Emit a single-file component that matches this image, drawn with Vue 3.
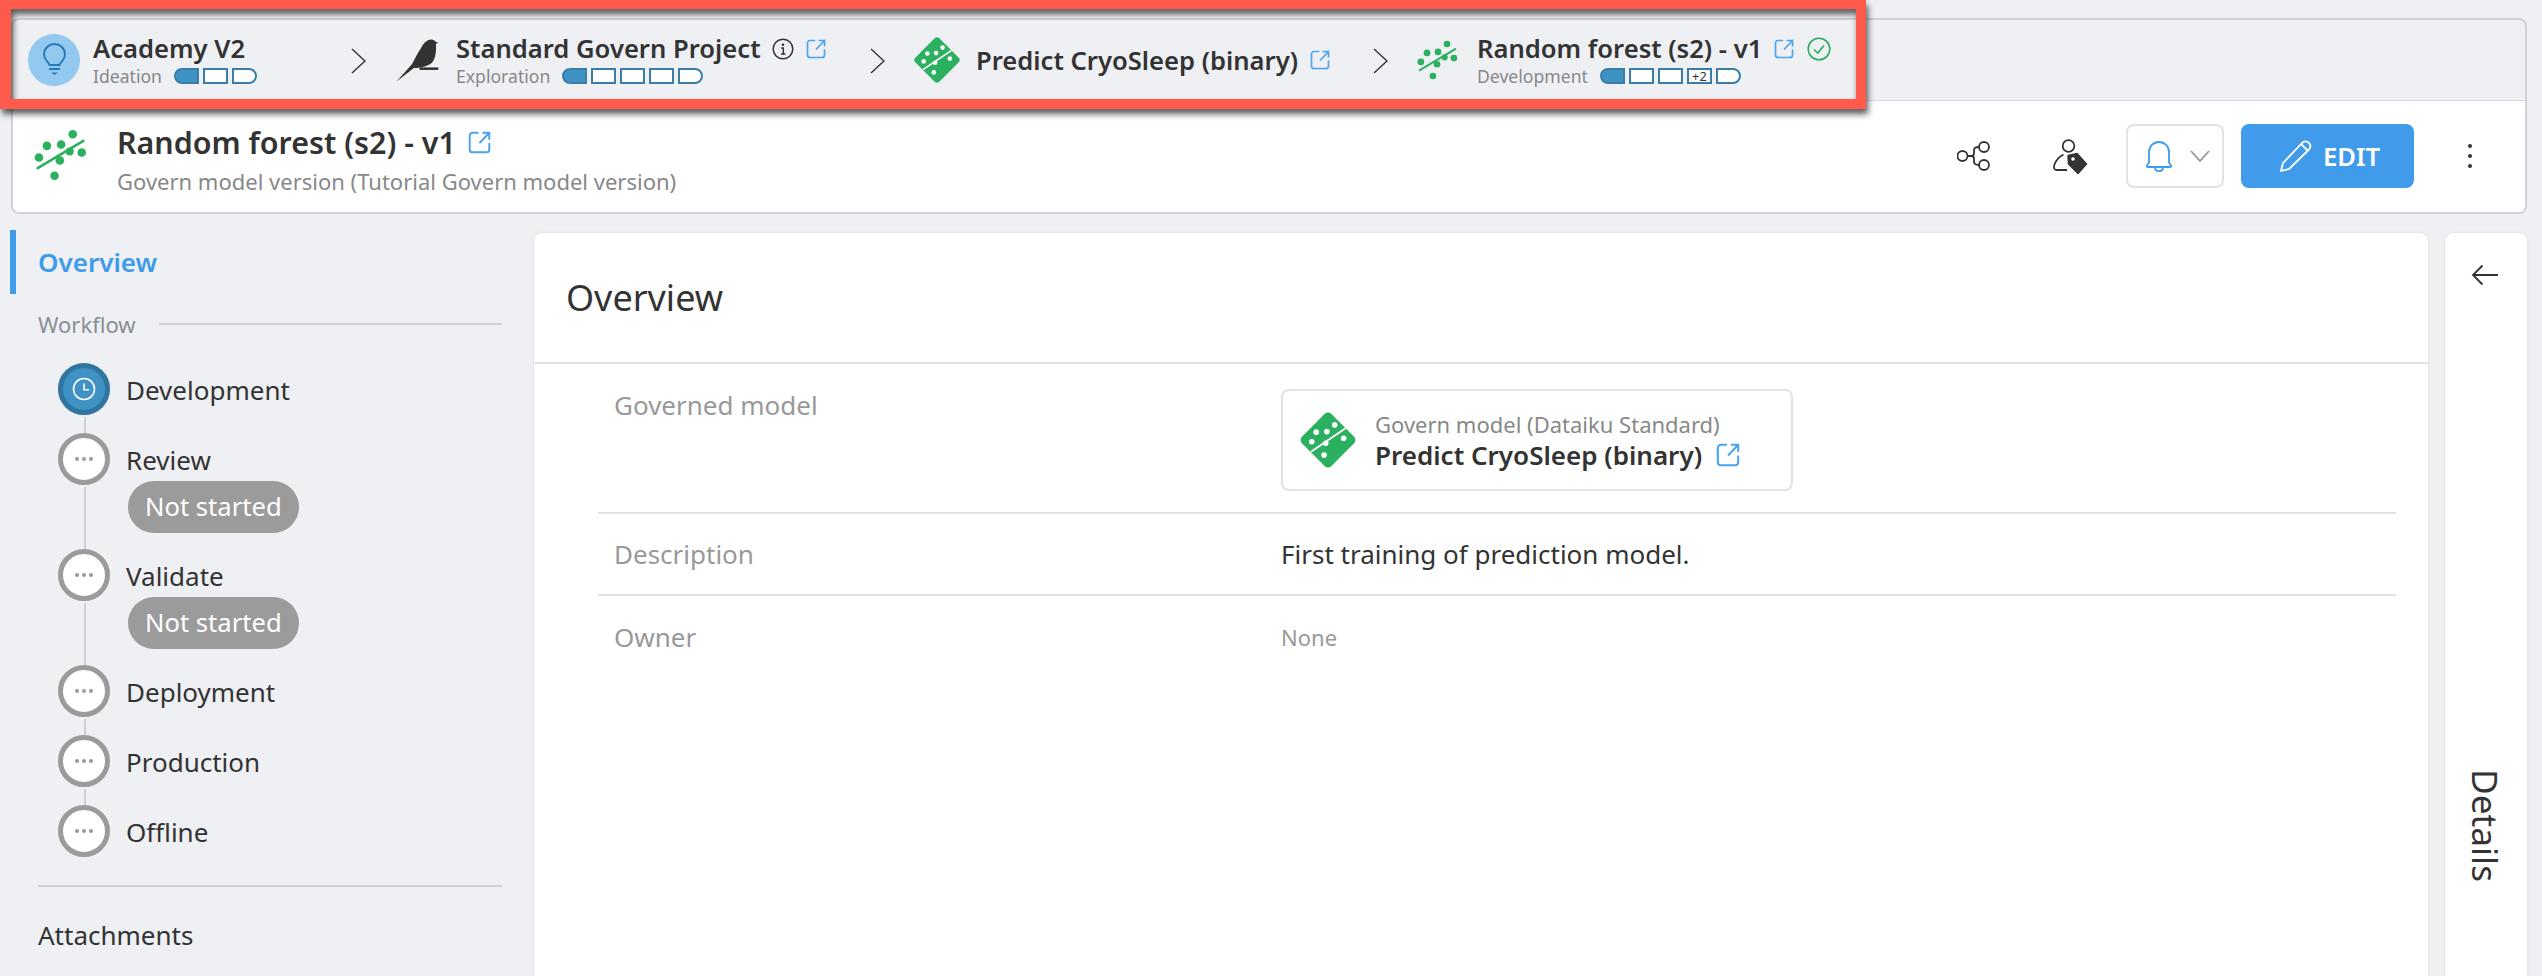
<script setup>
const segs = (n, extra) => Array.from({ length: n }, (_, i) => (i === extra ? '+2' : ''))
const crumbs = [
  { cls: 'c1', icon: '#i-bulb', title: 'Academy V2', phase: 'Ideation', steps: segs(3, -1) },
  { cls: 'c2', icon: '#i-bird', title: 'Standard Govern Project', phase: 'Exploration', steps: segs(5, -1), info: true, link: true },
  { cls: 'c3', icon: '#i-diamond', title: 'Predict CryoSleep (binary)', link: true },
  { cls: 'c4', icon: '#i-forest', title: 'Random forest (s2) - v1', phase: 'Development', steps: segs(5, 3), link: true, check: true },
]
const steps = [
  { name: 'Development', active: true },
  { name: 'Review', pill: 'Not started' },
  { name: 'Validate', pill: 'Not started' },
  { name: 'Deployment' },
  { name: 'Production' },
  { name: 'Offline' },
]
</script>

<template>
  <div class="page">
    <svg class="defs" aria-hidden="true">
      <symbol id="i-link" viewBox="0 0 20 20">
        <path d="M8.5 1.5H4A2.5 2.5 0 0 0 1.5 4v12A2.5 2.5 0 0 0 4 18.500h12a2.500 2.500 0 0 0 2.500-2.500v-5" fill="none" stroke="#4aa3ee" stroke-width="1.700" stroke-linecap="round" />
        <path d="M10 10.500 18.500 1.500M12.500 1.500h6v6" fill="none" stroke="#4aa3ee" stroke-width="1.700" />
      </symbol>
      <symbol id="i-diamond" viewBox="-50 -50 100 100">
        <rect x="-37" y="-37" width="74" height="74" rx="8" transform="rotate(45)" fill="#2bb05f" />
        <path d="M-29 20 30-20" stroke="#fff" stroke-width="3.500" stroke-linecap="round" />
        <g fill="#fff">
          <circle cx="-21" cy="-14" r="5" /><circle cx="-2" cy="-15" r="5" /><circle cx="12" cy="-27" r="5" />
          <circle cx="-29" cy="3" r="5" /><circle cx="28" cy="-3" r="5" /><circle cx="-4" cy="6" r="5" />
          <circle cx="-7" cy="27" r="5" />
        </g>
      </symbol>
      <symbol id="i-forest" viewBox="100 90 160 155">
        <path d="M111 207 249 125" stroke="#2bb05f" stroke-width="8" stroke-linecap="round" />
        <g fill="#2bb05f">
          <circle cx="217" cy="105" r="13" /><circle cx="139" cy="140" r="13" /><circle cx="182" cy="136" r="13" />
          <circle cx="115" cy="175" r="13" /><circle cx="178" cy="184" r="13" /><circle cx="208" cy="157" r="12" />
          <circle cx="244" cy="160" r="13" /><circle cx="162" cy="230" r="13" />
        </g>
      </symbol>
      <symbol id="i-bird" viewBox="40 65 140 142">
        <path d="M45 203 95 146C104 130 112 112 122 98 130 82 140 70 155 69 162 69 167 72 170 77L177 77 170 84C172 100 170 130 158 142 145 155 120 160 100 160Z" fill="#333" />
        <rect x="118" y="158" width="60" height="8" fill="#333" />
      </symbol>
      <symbol id="i-bulb" viewBox="0 0 52 52">
        <circle cx="26" cy="26" r="26" fill="#93c9ef" />
        <path d="M21.500 31C20.500 27.500 16 26.500 16 20.500a10.500 10.500 0 0 1 21 0C37 26.500 32.500 27.500 31.500 31Z" fill="none" stroke="#2a7ab8" stroke-width="2" />
        <path d="M21 35h11" stroke="#2a7ab8" stroke-width="2" />
        <path d="M23 38.500h7l-3.500 2.500Z" fill="#2a7ab8" />
      </symbol>
    </svg>

    <header class="head">
      <nav class="crumbs">
        <template v-for="(c, i) in crumbs" :key="c.title">
          <div class="crumb" :class="c.cls">
            <svg class="crumb-icon"><use :href="c.icon" /></svg>
            <div>
              <div class="crumb-title">
                <span>{{ c.title }}</span>
                <svg v-if="c.info" class="info" viewBox="0 0 22 22">
                  <circle cx="11" cy="11" r="9.800" fill="none" stroke="#333" stroke-width="1.500" />
                  <circle cx="11" cy="6.800" r="1.300" fill="#333" />
                  <path d="M9.200 10H11.300V16M9 16H13.500" fill="none" stroke="#333" stroke-width="1.500" />
                </svg>
                <svg v-if="c.link" class="link"><use href="#i-link" /></svg>
                <svg v-if="c.check" class="check" viewBox="0 0 24 24">
                  <circle cx="12" cy="12" r="10.800" fill="none" stroke="#27ae60" stroke-width="1.600" />
                  <path d="M7 12.500 10.800 16 17 8.500" fill="none" stroke="#27ae60" stroke-width="1.600" />
                </svg>
              </div>
              <div v-if="c.phase" class="crumb-sub">
                <span>{{ c.phase }}</span>
                <div class="segs">
                  <span v-for="(s, j) in c.steps" :key="j" class="seg">{{ s }}</span>
                </div>
              </div>
            </div>
          </div>
          <svg v-if="i < crumbs.length - 1" class="chev" viewBox="0 0 15 26">
            <path d="M1 1 14 13 1 25" fill="none" stroke="#333" stroke-width="1.400" />
          </svg>
        </template>
      </nav>

      <div class="title-row">
        <svg class="title-icon"><use href="#i-forest" /></svg>
        <div class="title-text">
          <div class="title">
            <span>Random forest (s2) - v1</span>
            <svg class="title-link"><use href="#i-link" /></svg>
          </div>
          <div class="subtitle">Govern model version (Tutorial Govern model version)</div>
        </div>
        <div class="actions">
          <svg class="a-net" viewBox="0 0 33 30">
            <g fill="none" stroke="#333" stroke-width="1.800">
              <circle cx="5.500" cy="15" r="5" /><circle cx="27" cy="6" r="5" /><circle cx="27" cy="24" r="5" />
              <path d="M10.500 15H14C16 15 17 14 17 12.500V9.500C17 7 18.500 6 22 6M14 15C16 15 17 16 17 17.500V20.500C17 23 18.500 24 22 24" />
            </g>
          </svg>
          <svg class="a-user" viewBox="0 0 35 35">
            <circle cx="15.500" cy="7" r="5.800" fill="none" stroke="#333" stroke-width="1.800" />
            <path d="M14 31H3.500C1 31 .5 28 1.500 25.500 3 21.500 6.500 17.500 10.500 15.500" fill="none" stroke="#333" stroke-width="1.800" />
            <path d="M15 16.500 24 14.500 33.500 25 25 34.500 15.500 25Z" fill="#333" stroke="#333" stroke-width="1.500" stroke-linejoin="round" />
            <circle cx="20" cy="20" r="1.800" fill="#fff" />
          </svg>
          <button class="bell">
            <svg class="bell-icon" viewBox="0 0 28 32">
              <path d="M2 25.500 4 22.500V12a10 10 0 0 1 20 0v10.500l2 3c.4.800 0 1.500-1 1.500H3c-1 0-1.400-.7-1-1.500Z" fill="none" stroke="#409ceb" stroke-width="1.800" />
              <path d="M10 27c0 3 1.800 4.200 4 4.200s4-1.200 4-4.200" fill="none" stroke="#409ceb" stroke-width="1.800" />
            </svg>
            <svg class="bell-chev" viewBox="0 0 20 12"><path d="M1 1 10 11 19 1" fill="none" stroke="#999" stroke-width="1.800" /></svg>
          </button>
          <button class="edit">
            <svg class="pencil" viewBox="0 0 33 33">
              <path d="M2 31 4 23 23 3C25 1 28 1 30 3S32 7 30 9.500L10 29Z" fill="none" stroke="#fff" stroke-width="1.800" stroke-linejoin="round" />
              <path d="M22 4 29 11" stroke="#fff" stroke-width="1.800" />
            </svg>
            <span>EDIT</span>
          </button>
          <div class="more"><i /><i /><i /></div>
        </div>
      </div>
    </header>

    <div class="body">
      <aside class="side">
        <div class="side-active">Overview</div>
        <div class="wf-head"><span>Workflow</span><i /></div>
        <div class="steps">
          <div v-for="(s, i) in steps" :key="s.name" class="step">
            <div class="rail">
              <div class="dot" :class="{ active: s.active }">
                <svg v-if="s.active" class="clock" viewBox="0 0 24 24">
                  <circle cx="12" cy="12" r="10.500" fill="none" stroke="#fff" stroke-width="1.600" />
                  <path d="M12 6.500V12.800H17" fill="none" stroke="#fff" stroke-width="1.600" />
                </svg>
                <template v-else><b /><b /><b /></template>
              </div>
              <i v-if="i < steps.length - 1" class="wire" />
            </div>
            <div class="step-body" :class="{ last: i === steps.length - 1 }">
              <div class="step-name">{{ s.name }}</div>
              <div v-if="s.pill" class="pill">{{ s.pill }}</div>
            </div>
          </div>
        </div>
        <div class="side-rule" />
        <div class="side-link">Attachments</div>
      </aside>

      <main class="main">
        <h2 class="main-title">Overview</h2>
        <div class="fields">
          <div class="field field-model">
            <div class="f-label">Governed model</div>
            <div class="model-card">
              <svg class="model-icon"><use href="#i-diamond" /></svg>
              <div>
                <div class="model-type">Govern model (Dataiku Standard)</div>
                <div class="model-name">
                  <span>Predict CryoSleep (binary)</span>
                  <svg class="model-link"><use href="#i-link" /></svg>
                </div>
              </div>
            </div>
          </div>
          <div class="field">
            <div class="f-label">Description</div>
            <div class="f-value">First training of prediction model.</div>
          </div>
          <div class="field field-last">
            <div class="f-label">Owner</div>
            <div class="f-none">None</div>
          </div>
        </div>
      </main>

      <aside class="details">
        <svg class="back" viewBox="0 0 28 22"><path d="M27 11H2M11.500 1.500 2 11l9.500 9.500" fill="none" stroke="#333" stroke-width="1.800" /></svg>
        <div class="details-label">Details</div>
      </aside>
    </div>

    <div class="highlight" />
  </div>
</template>

<style>
html, body { margin: 0; background: #eef0f4; }
</style>

<style scoped>
.page {
  position: relative;
  width: 2542px;
  height: 976px;
  overflow: hidden;
  box-sizing: border-box;
  padding-top: 18px;
  background: #eef0f4;
  color: #333;
  font-family: "Noto Sans", "Open Sans", sans-serif;
}
.defs { display: none; }
.head {
  margin-left: 11px;
  width: 2516px;
  box-sizing: border-box;
  border: 2px solid #cfd0d8;
  border-radius: 8px;
  overflow: hidden;
}
.crumbs {
  display: flex;
  align-items: center;
  height: 80px;
  padding-left: 15px;
  border-bottom: 1px solid #d5d7dd;
}
.crumb { display: flex; align-items: center; flex: none; }
.c1 { width: 323px; gap: 13px; }
.c2 { width: 475px; gap: 17px; }
.c3 { width: 459px; gap: 16px; }
.c4 { gap: 19px; }
.crumb-icon { display: block; flex: none; }
.c1 .crumb-icon { width: 52px; height: 52px; }
.c2 .crumb-icon { width: 44px; height: 45px; }
.c3 .crumb-icon { width: 46px; height: 46px; }
.c4 .crumb-icon { width: 41px; height: 40px; }
.chev { flex: none; width: 15px; height: 26px; margin-right: 29px; margin-top: 2px; }
.crumb-title {
  display: flex;
  align-items: center;
  height: 32px;
  font-size: 25.6px;
  font-weight: 600;
  white-space: nowrap;
}
.crumb-title span { margin-top: -2px; }
.c3 .crumb-title span { margin-top: 0; }
.info { width: 22px; height: 22px; margin-left: 11px; }
.link { width: 20px; height: 20px; margin-left: 12px; margin-bottom: 1px; }
.check { width: 24px; height: 24px; margin-left: 13px; }
.crumb-sub {
  display: flex;
  align-items: center;
  gap: 12px;
  height: 22px;
  font-size: 17.6px;
  color: #888;
}
.segs { display: flex; gap: 4px; }
.seg {
  display: flex;
  align-items: center;
  justify-content: center;
  box-sizing: border-box;
  width: 25px;
  height: 16px;
  border: 2px solid #3a7ea8;
  background: #fff;
  color: #333;
  font-size: 12.800px;
  line-height: 1;
}
.seg:first-child { background: #3f92c4; border-radius: 8px 0 0 8px; }
.seg:last-child { border-radius: 0 8px 8px 0; }

.title-row {
  display: flex;
  align-items: center;
  height: 111px;
  padding-left: 21px;
  background: #fff;
}
.title-icon { width: 53px; height: 52px; margin-right: 30px; flex: none; margin-top: -3px; }
.title-text { margin-top: 4px; }
.title {
  display: flex;
  align-items: center;
  height: 40px;
  font-size: 30.4px;
  font-weight: 600;
}
.title-link { width: 23px; height: 23px; margin-left: 12px; }
.subtitle { margin-top: 5px; height: 28px; line-height: 28px; font-size: 22px; color: #888; }
.actions { display: flex; align-items: center; margin-left: auto; height: 64px; margin-top: -1px; }
.a-net { width: 33px; height: 30px; }
.a-user { width: 35px; height: 35px; margin-left: 63px; }
.bell {
  display: flex;
  align-items: center;
  box-sizing: border-box;
  width: 98px;
  height: 64px;
  margin-left: 38px;
  padding: 0 0 0 17px;
  border: 2px solid #e2e2e2;
  border-radius: 8px;
  background: #fff;
}
.bell-icon { width: 28px; height: 32px; }
.bell-chev { width: 20px; height: 12px; margin-left: 17px; }
.edit {
  display: flex;
  align-items: center;
  box-sizing: border-box;
  width: 173px;
  height: 64px;
  margin-left: 17px;
  padding: 0 0 0 38px;
  border: 0;
  border-radius: 8px;
  background: #409ceb;
  color: #fff;
  font-family: inherit;
  font-size: 25.6px;
  font-weight: 600;
}
.pencil { width: 33px; height: 33px; margin-right: 11px; }
.more { display: flex; flex-direction: column; gap: 6px; margin: 0 53px 0 54px; }
.more i { width: 4px; height: 4px; border-radius: 50%; background: #333; display: block; }

.body { display: flex; margin-top: 16px; }
.side { flex: none; box-sizing: border-box; width: 534px; padding-right: 32px; }
.side-active {
  display: flex;
  align-items: center;
  height: 64px;
  margin-left: 10px;
  padding-left: 22px;
  border-left: 6px solid #409ceb;
  color: #3d9be9;
  font-size: 26px;
  font-weight: 600;
}
.wf-head {
  display: flex;
  align-items: center;
  height: 30px;
  margin-top: 15px;
  margin-bottom: 1px;
  padding-left: 38px;
  color: #8a8f93;
  font-size: 22px;
}
.wf-head i { flex: 1; height: 2px; margin: 0 0 0 23px; background: #cfd0d8; }
.steps { margin-top: 24px; padding-left: 58px; }
.step { display: flex; }
.rail { display: flex; flex-direction: column; align-items: center; width: 52px; flex: none; }
.dot {
  display: flex;
  align-items: center;
  justify-content: center;
  gap: 3px;
  box-sizing: border-box;
  flex: none;
  width: 52px;
  height: 52px;
  border: 5px solid #9b9b9b;
  border-radius: 50%;
  background: #fff;
}
.dot b { width: 4px; height: 4px; border-radius: 50%; background: #9b9b9b; }
.dot.active { background: #3f92c4; border-color: #2f75a0; }
.clock { width: 24px; height: 24px; }
.wire { flex: 1; width: 2px; margin: 2px 0 0 2px; background: #cfd0d8; }
.step-body { margin-left: 16px; padding-bottom: 18px; }
.step-body.last { padding-bottom: 0; }
.step-name { height: 52px; line-height: 54px; font-size: 26px; }
.pill {
  box-sizing: border-box;
  height: 52px;
  margin: -4px 0 -2px 2px;
  padding: 0 17px;
  border-radius: 26px;
  background: #9b9b9b;
  color: #fff;
  font-size: 25.6px;
  line-height: 52px;
}
.side-rule { height: 2px; margin: 28px 0 0 38px; background: #cfd0d8; }
.side-link { margin: 28px 0 0 38px; height: 40px; line-height: 41px; font-size: 26px; }

.main {
  flex: none;
  width: 1894px;
  height: 800px;
  margin-top: 3px;
  border-radius: 8px 8px 0 0;
  background: #fff;
  box-shadow: 0 0 3px rgba(0, 0, 0, .12);
}
.main-title {
  box-sizing: border-box;
  height: 131px;
  margin: 0;
  padding-left: 32px;
  border-bottom: 2px solid #e2e2e2;
  font-size: 36px;
  font-weight: 400;
  line-height: 129px;
}
.fields { margin: 0 32px 0 64px; }
.field {
  display: flex;
  align-items: center;
  height: 82px;
  box-sizing: border-box;
  border-bottom: 2px solid #e2e2e2;
}
.field-model { align-items: flex-start; height: 150px; padding-top: 25px; }
.field-last { border-bottom: 0; }
.f-label { width: 683px; box-sizing: border-box; padding-left: 16px; height: 32px; line-height: 32px; font-size: 26px; color: #999; flex: none; }
.f-value { font-size: 26px; }
.f-none { font-size: 22px; color: #999; }
.model-card {
  display: flex;
  align-items: center;
  box-sizing: border-box;
  width: 512px;
  height: 102px;
  padding-left: 17px;
  border: 2px solid #e2e2e2;
  border-radius: 8px;
}
.model-icon { width: 56px; height: 60px; margin-right: 19px; }
.model-type { font-size: 22px; line-height: 30px; color: #888; }
.model-name { display: flex; align-items: center; font-size: 26px; font-weight: 600; line-height: 32px; }
.model-link { width: 24px; height: 24px; margin-left: 14px; }

.details {
  flex: none;
  display: flex;
  flex-direction: column;
  align-items: center;
  width: 82px;
  height: 800px;
  margin: 3px 0 0 17px;
  padding-top: 31px;
  box-sizing: border-box;
  border-radius: 8px 8px 0 0;
  background: #fff;
  box-shadow: 0 0 3px rgba(0, 0, 0, .12);
}
.back { width: 28px; height: 22px; flex: none; margin-left: -2px; }
.details-label { margin-top: 483px; writing-mode: vertical-rl; font-size: 35.2px; line-height: 40px; }

.highlight {
  position: absolute;
  top: 0;
  left: 0;
  width: 1866px;
  height: 109px;
  box-sizing: border-box;
  border: 10px solid #ff5a4c;
  border-top-width: 9px;
  border-left-width: 11px;
  filter: drop-shadow(2px 5px 3px rgba(0, 0, 0, .65));
}
</style>
